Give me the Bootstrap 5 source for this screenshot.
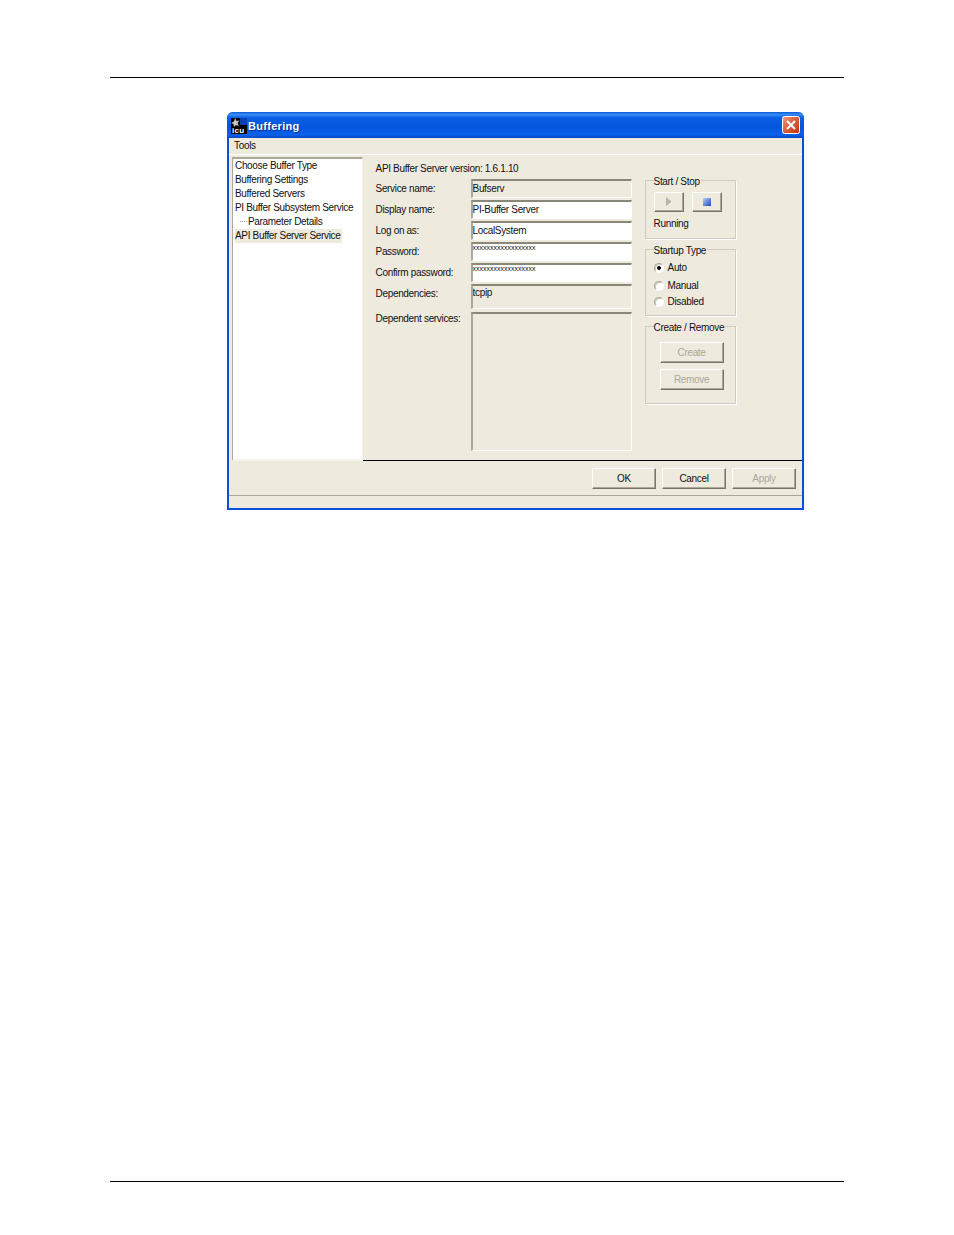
<!DOCTYPE html>
<html lang="en">
<head>
<meta charset="utf-8">
<title>Buffering</title>
<link href="https://cdn.jsdelivr.net/npm/bootstrap@5.3.0/dist/css/bootstrap.min.css" rel="stylesheet">
<style>
html,body{margin:0;background:#fff}
body{font:10px/14px "Liberation Sans",Arial,sans-serif;letter-spacing:-.33px;color:#111}
.sheet{height:1235px;padding:77px 110px 53px}
.hrule{border-top:1px solid #000}
.xpwin{width:577px;height:398px;margin:34px 0 0 117px;background:#eeeade;border:solid #0a50d8;border-width:0 2px 2px 2px;border-radius:6px 6px 0 0}
.xptitle{height:26px;margin:0 -2px;padding:2px 4px 0;border-radius:6px 6px 0 0;background:linear-gradient(180deg,#0a5ad6 0,#3a8cf6 10%,#0a5fe6 22%,#0456dc 60%,#0a62ea 88%,#0346c4 100%);color:#fff;font:700 11px/24px "Liberation Sans",Arial,sans-serif;letter-spacing:.3px;text-shadow:1px 1px 0 #0a2a90;gap:1px}
.xpclose{width:18px;height:18px;margin-top:-2px}
.xpmenu{height:17px;padding-left:5px;line-height:15px;border-bottom:1px solid #fff}
.xpbody{height:307px}
.xptree{width:131px;margin:2px 0 0 3px;height:304px;background:#fff;border-top:2px solid #aca899;border-left:1px solid #aca899;border-right:1px solid #f6f4ec;border-bottom:2px solid #f6f4ec;padding-left:1px;white-space:nowrap}
.treerow{height:14px;padding-left:1px;line-height:13px}
.treesel{display:inline-block;background:#eeeade;padding-right:1px;height:14px}
.treesub{padding-left:6px}
.treedots{display:inline-block;width:7px;border-top:1px dotted #9a9a9a;vertical-align:3px;margin-right:1px}
.xppane{width:441px;height:306px;border-bottom:1px solid #000;padding:7px 0 0 13px;gap:13px}
.formcol{width:256px}
.verline{height:13px;margin-bottom:4px;line-height:13px}
.fieldgrid{display:grid;grid-template-columns:95px 161px;grid-template-rows:19px 19px 19px 19px 19px 26px 139px;row-gap:2px}
.fieldlabel{align-self:center}
.fieldlabel.deplabel{align-self:start;padding-top:3px}
.fieldlabel.dep2label{align-self:start;padding-top:0}
.fieldbox{border-top:2px solid #8b8778;border-left:2px solid #aca899;border-right:1px solid #fff;border-bottom:1px solid #fff;padding:0;line-height:15px;overflow:hidden}
.fieldwhite{background:#fff}
.fieldtop{line-height:8px;font-size:7px;letter-spacing:0}
.fielddep{margin-bottom:1px;line-height:13px}
.groupcol{width:91px;margin-top:10px}
.grpbox{border:1px solid #cfccbc;box-shadow:1px 1px 0 #fff;padding:0 0 0 8px;margin:0;min-width:0}
.grpbox legend{float:none;width:auto;font-size:10px;line-height:12px;margin:0;padding:4px 1px 0 0;color:#111}
.grp1{height:67px}
.grp2{height:75px;margin-top:2px}
.grp3{height:86px;margin-top:2px}
.xpbtn{display:block;padding:0;font:10px/18px "Liberation Sans",Arial,sans-serif;letter-spacing:-.33px;color:#111;background:#eeeade;border:1px solid;border-color:#fff #77746a #77746a #fff;border-radius:0;box-shadow:inset -1px -1px 0 #aca899}
.xpbtn:disabled{color:#aca899;background:#eeeade;border-color:#fff #77746a #77746a #fff;opacity:1}
.btn60{width:64px;height:21px}
.btn30{width:30px;height:20px}
.startrow{gap:8px;padding-top:4px}
.createstack{gap:6px;padding:8px 0 0 6px}
.footbar{height:34px;padding:6px 6px 0 0;border-bottom:1px solid #aca899;gap:6px}
.runlabel{margin-top:5px}
.radline{height:16px;gap:4px}
.radfirst{margin-top:3px}
.radnext{margin-top:2px}
.radmark{width:10px;height:10px;border-radius:50%;background:#fff;border:1px solid #aca899;border-right-color:#fff;border-bottom-color:#fff;box-shadow:inset 1px 1px 0 #c8c6b8;flex:none}
.radon{background:radial-gradient(circle,#111 0 1.6px,#fff 2.2px)}
</style>
</head>
<body>
<div class="sheet d-flex flex-column">
  <div class="hrule"></div>
  <div class="xpwin d-flex flex-column">
    <div class="xptitle d-flex align-items-center">
      <svg width="16" height="16" viewBox="0 0 16 16" class="flex-none"><rect width="16" height="16" fill="#000"/><rect x="9" y="0" width="7" height="7" fill="#0a3fb0"/><polygon points="4,0 5.5,3 8.5,2.5 6.5,5 8,8 5,7 3,9 2.5,6 0,5 3,3.5" fill="#c8c8c8"/><text x="1" y="15" font-family="Liberation Sans" font-size="8" font-weight="700" fill="#fff" style="text-shadow:none">icu</text></svg>
      <span class="flex-grow-1">Buffering</span>
      <svg class="xpclose" viewBox="0 0 18 18"><defs><linearGradient id="cg" x1="0" y1="0" x2="1" y2="1"><stop offset="0" stop-color="#f0a080"/><stop offset=".45" stop-color="#e0603c"/><stop offset="1" stop-color="#c0300c"/></linearGradient></defs><rect x=".5" y=".5" width="17" height="17" rx="2" fill="url(#cg)" stroke="#fff"/><path d="M5 5l8 8M13 5l-8 8" stroke="#fff" stroke-width="2"/></svg>
    </div>
    <div class="xpmenu">Tools</div>
    <div class="xpbody d-flex">
      <div class="xptree">
        <div class="treerow">Choose Buffer Type</div>
        <div class="treerow">Buffering Settings</div>
        <div class="treerow">Buffered Servers</div>
        <div class="treerow">PI Buffer Subsystem Service</div>
        <div class="treerow treesub"><span class="treedots"></span>Parameter Details</div>
        <div class="treerow"><span class="treesel">API Buffer Server Service</span></div>
      </div>
      <div class="xppane d-flex">
        <div class="formcol">
          <div class="verline">API Buffer Server version: 1.6.1.10</div>
          <div class="fieldgrid">
            <div class="fieldlabel">Service name:</div><div class="fieldbox">Bufserv</div>
            <div class="fieldlabel">Display name:</div><div class="fieldbox fieldwhite">PI-Buffer Server</div>
            <div class="fieldlabel">Log on as:</div><div class="fieldbox fieldwhite">LocalSystem</div>
            <div class="fieldlabel">Password:</div><div class="fieldbox fieldwhite fieldtop">xxxxxxxxxxxxxxxxxx</div>
            <div class="fieldlabel">Confirm password:</div><div class="fieldbox fieldwhite fieldtop">xxxxxxxxxxxxxxxxxx</div>
            <div class="fieldlabel deplabel">Dependencies:</div><div class="fieldbox fielddep">tcpip</div>
            <div class="fieldlabel dep2label">Dependent services:</div><div class="fieldbox"></div>
          </div>
        </div>
        <div class="groupcol d-flex flex-column">
          <fieldset class="grpbox grp1">
            <legend>Start / Stop</legend>
            <div class="d-flex startrow">
              <button type="button" class="btn xpbtn btn30 d-flex align-items-center justify-content-center" aria-label="Start"><svg width="8" height="10" viewBox="0 0 8 10"><polygon points="1,0 7,5 1,10" fill="#b8b5a8"/><path d="M1 10L7 5" stroke="#fff"/></svg></button>
              <button type="button" class="btn xpbtn btn30 d-flex align-items-center justify-content-center" aria-label="Stop"><svg width="8" height="8" viewBox="0 0 8 8"><defs><linearGradient id="sg" x1="0" y1="0" x2="1" y2="1"><stop offset="0" stop-color="#b8d0f4"/><stop offset="1" stop-color="#1c44c4"/></linearGradient></defs><rect width="8" height="8" fill="url(#sg)"/></svg></button>
            </div>
            <div class="runlabel">Running</div>
          </fieldset>
          <fieldset class="grpbox grp2">
            <legend>Startup Type</legend>
            <div class="d-flex align-items-center radline radfirst"><span class="radmark radon"></span>Auto</div>
            <div class="d-flex align-items-center radline radnext"><span class="radmark"></span>Manual</div>
            <div class="d-flex align-items-center radline"><span class="radmark"></span>Disabled</div>
          </fieldset>
          <fieldset class="grpbox grp3">
            <legend>Create / Remove</legend>
            <div class="d-flex flex-column createstack">
              <button type="button" class="btn xpbtn btn60" disabled>Create</button>
              <button type="button" class="btn xpbtn btn60" disabled>Remove</button>
            </div>
          </fieldset>
        </div>
      </div>
    </div>
    <div class="footbar d-flex justify-content-end">
      <button type="button" class="btn xpbtn btn60">OK</button>
      <button type="button" class="btn xpbtn btn60">Cancel</button>
      <button type="button" class="btn xpbtn btn60" disabled>Apply</button>
    </div>
  </div>
  <div class="hrule mt-auto"></div>
</div>
<script src="https://cdn.jsdelivr.net/npm/bootstrap@5.3.0/dist/js/bootstrap.bundle.min.js"></script>
</body>
</html>
